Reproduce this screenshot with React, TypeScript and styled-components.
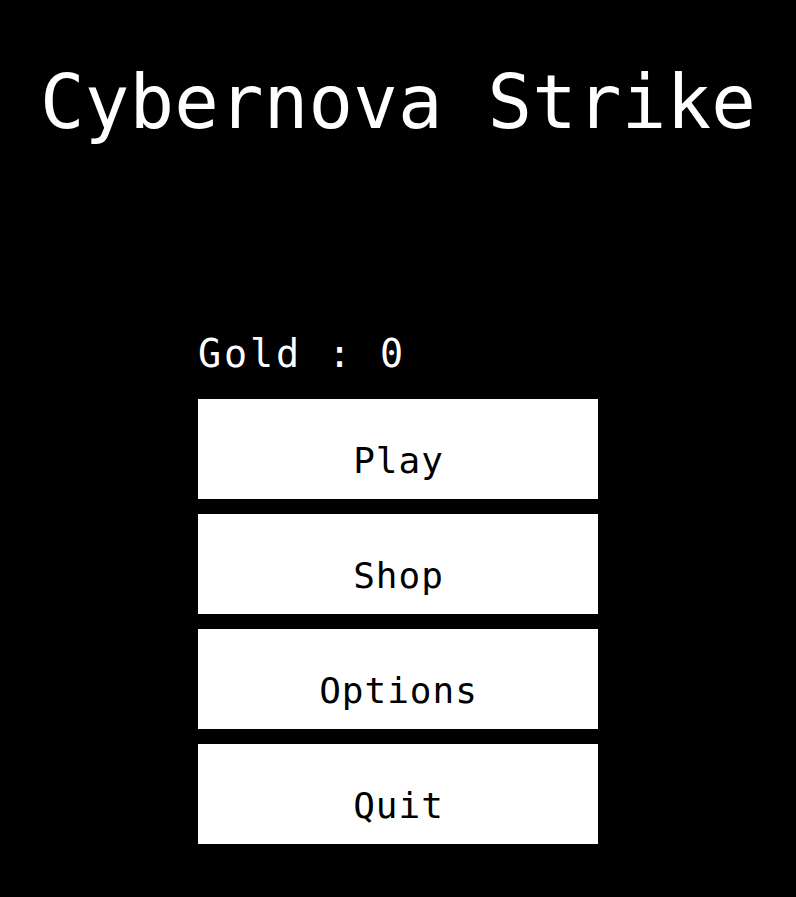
import React from 'react';
import styled, { createGlobalStyle } from 'styled-components';

const GlobalStyle = createGlobalStyle`
    html, body {
        margin: 0;
        padding: 0;
        background: #000;
    }
    body {
        font-family: "DejaVu Sans Mono", "Liberation Mono", monospace;
    }
`;

const Screen = styled.div`
    min-height: 100vh;
    background: #000;
    color: #fff;
    display: flex;
    flex-direction: column;
    align-items: center;
`;

const Title = styled.h1`
    margin: 65px 0 0;
    font-size: 74px;
    line-height: 1;
    font-weight: normal;
    letter-spacing: 0.2px;
    white-space: nowrap;
    text-align: center;
`;

const Menu = styled.div`
    width: 400px;
    margin-top: 196px;
    display: flex;
    flex-direction: column;
    gap: 15px;
`;

const Gold = styled.p`
    margin: 0 0 11px;
    font-size: 38.4px;
    line-height: 1;
    letter-spacing: 2.9px;
    white-space: nowrap;
`;

const MenuButton = styled.button`
    display: block;
    width: 400px;
    height: 100px;
    box-sizing: border-box;
    padding: 23px 0 0 1px;
    border: none;
    border-radius: 0;
    background: #fff;
    color: #000;
    font-family: "DejaVu Sans Mono", "Liberation Mono", monospace;
    font-size: 36px;
    line-height: 1;
    letter-spacing: 1px;
    text-align: center;
    vertical-align: top;
    cursor: pointer;
`;

const items = ['Play', 'Shop', 'Options', 'Quit'];

const App = () => {
    return (
        <Screen>
            <GlobalStyle />
            <Title>Cybernova Strike</Title>
            <Menu>
                <Gold>Gold : 0</Gold>
                {items.map(label => (
                    <MenuButton key={label}>{label}</MenuButton>
                ))}
            </Menu>
        </Screen>
    );
};

export default App;
